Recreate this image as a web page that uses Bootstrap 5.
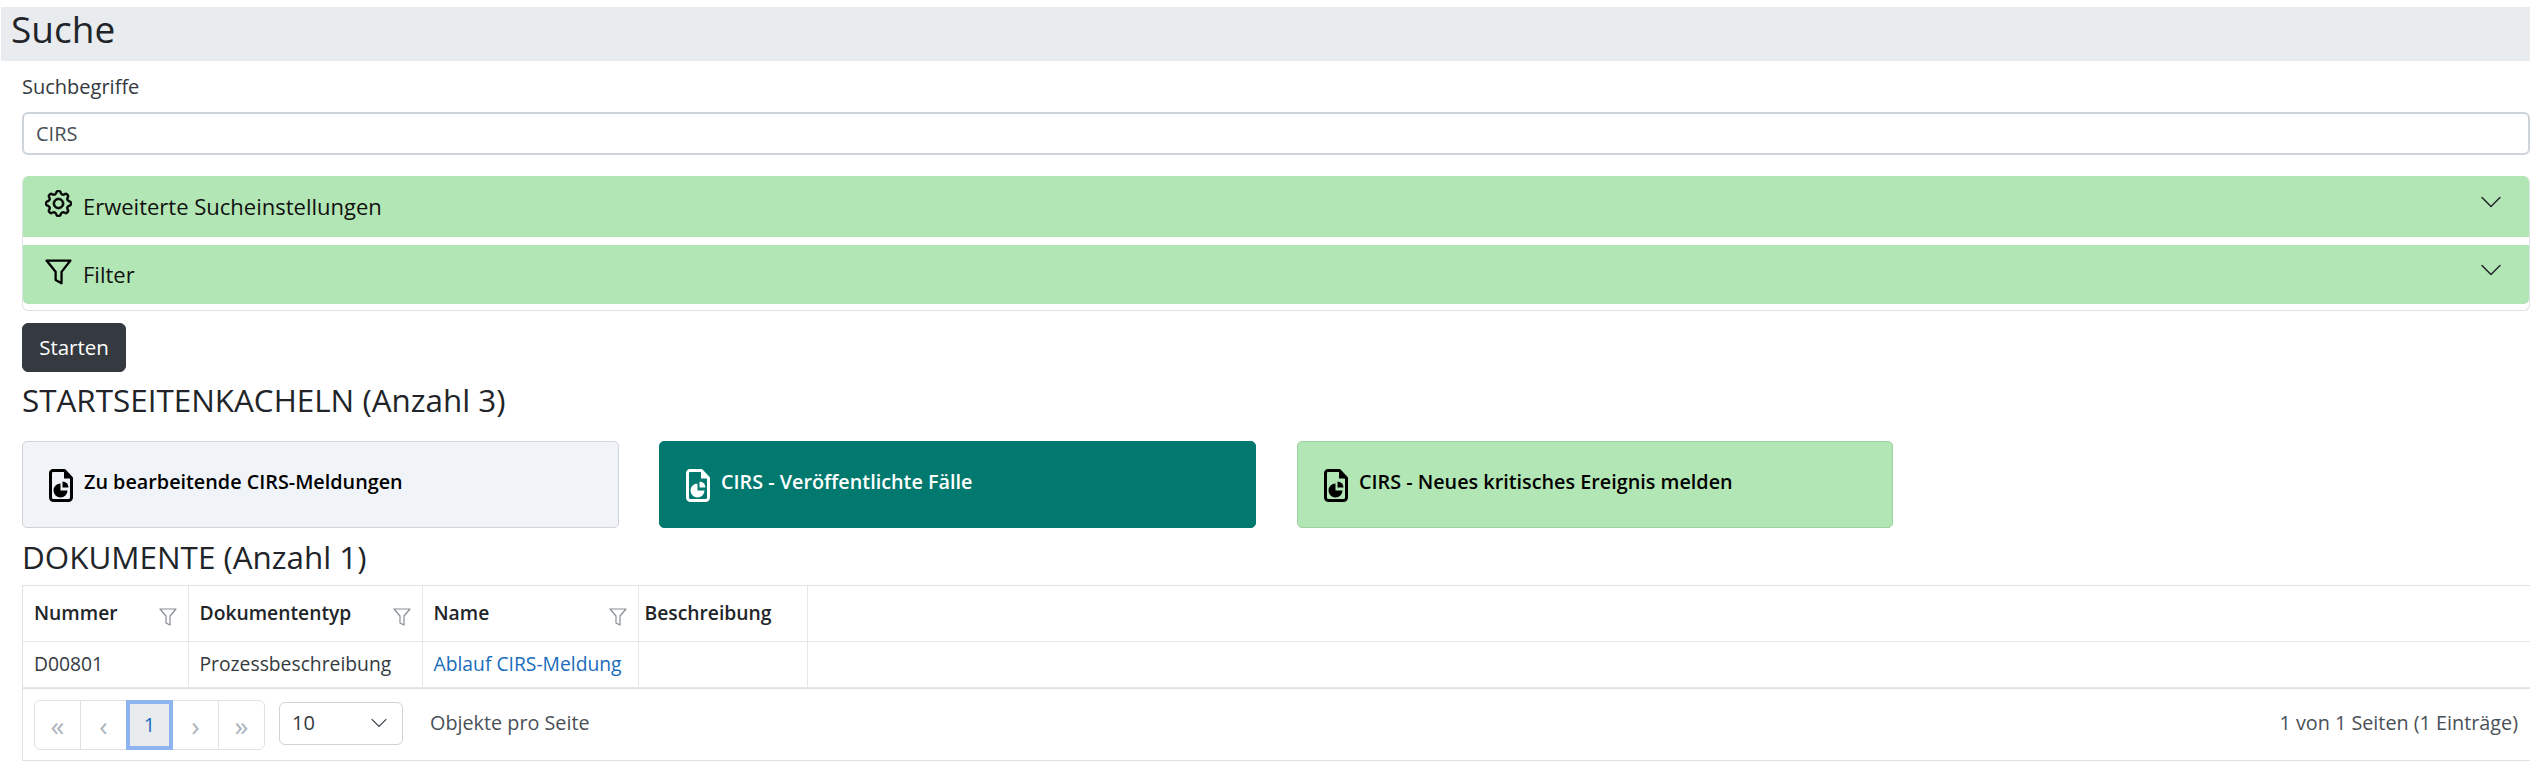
<!DOCTYPE html>
<html lang="de"><head><meta charset="utf-8"><title>Suche</title>
<link href="https://cdn.jsdelivr.net/npm/bootstrap@5.3.0/dist/css/bootstrap.min.css" rel="stylesheet">
<style>
html,body{height:762px;overflow:hidden}
body{font-family:"Open Sans","Liberation Sans",sans-serif;font-size:20px;color:#212529;background:#fff;padding-top:7px}
.page-band{background:#e9ecef;height:54px;margin-left:1px;padding:0 0 0 10px;font-size:37px;line-height:44px;font-weight:400;margin-bottom:0}
.page-body{padding:0 0 0 22px}
.term-label{display:block;font-size:20px;line-height:24px;margin:14px 0 13px;color:#343a40}
.term-input.form-control{height:43px;font-size:20px;padding:0 12px;border:2px solid #ced4da;color:#495057;border-radius:6px;margin-bottom:21px}
.search-acc{border:1px solid #dee2e6;border-top:0;border-radius:6px;height:135px;margin-bottom:12px;overflow:hidden;--bs-accordion-border-width:0}
.search-acc .accordion-item{border:0;background:transparent}
.search-acc .accordion-button{background:#b3e6b5;color:#111;font-size:22px;padding:0 26px 0 22px;box-shadow:none;border-radius:0;gap:11px}
.search-acc .accordion-button::after{width:24px;height:24px;background-size:24px;transform:translateY(-5px)}
.acc-first .accordion-button{height:61px;margin-bottom:8px}
.acc-second .accordion-button{height:59px}
.acc-ico{width:27px;height:27px;flex:none;transform:translateY(-3px);color:#000}
.go-btn.btn{background:#343a40;border-color:#343a40;color:#fff;font-size:20.5px;width:104px;height:49px;padding:0;border-radius:6px;display:block}
.sect-title{font-size:31.4px;line-height:38px;font-weight:400;margin:0;color:#212529}
.t-one{margin-top:9px;margin-bottom:22px}
.t-two{margin-top:10px;margin-bottom:9px}
.tile-row{gap:40px}
.tile{width:597px;height:87px;border-radius:5px;display:flex;align-items:center;gap:11px;padding:0 0 5px 26px;font-size:19.800px;font-weight:600;border:1px solid #ced4da;margin:0}
.tile svg{width:24px;height:33px;flex:none;transform:translateY(3px)}
.tile-light{background:#f0f4f8;color:#000}
.tile-teal{background:#01796f;border-color:#01796f;color:#fff;margin-right:1px}
.tile-green{background:#b3e6b5;border-color:#9fd0a1;color:#000;width:596px}
.doc-wrap{border:1px solid #dee2e6;border-right:0;height:176px}
.doc-table{table-layout:fixed;width:100%;margin:0;font-size:19.300px;border-color:#e4e7ea}
.doc-table th,.doc-table td{padding:0 11px;border-right:1px solid #e4e7ea;vertical-align:middle}
.doc-table th{height:55px;font-weight:600;position:relative;padding-bottom:0}
.doc-table td{height:46px;color:#343a40}
.doc-table tr>*:last-child{border-right:0}
.doc-table th.tight{padding-left:6px}
.fn{position:absolute;right:11px;top:21px;width:18px;height:20px}
.doc-link{color:#1a6cbd;text-decoration:none}
.pager-row{height:74px;padding:0 12px 0 11px;border-top:1px solid #dee2e6;display:flex;align-items:center}
.pager-row .pagination{margin:0 14px 0 0;--bs-pagination-border-color:#dee2e6}
.pager-row .page-link{width:47px;height:50px;padding:0;display:flex;align-items:center;justify-content:center;font-size:28px;color:#adb5bd;background:#fff;margin-left:0}
.pager-row .page-item+.page-item .page-link{margin-left:-1px;width:47px}
.pager-row .cur .page-link{background:#e9ecef;border:4px solid #8db4ee;border-radius:0;color:#1a6cbd;font-size:20px;position:relative;z-index:2}
.size-sel.form-select{width:124px;height:43px;font-size:20px;padding:0 12px;margin:-4px 27px 0 0;color:#343a40;border-color:#ced4da;background-image:url("data:image/svg+xml,%3csvg xmlns='http://www.w3.org/2000/svg' viewBox='0 0 16 16'%3e%3cpath fill='none' stroke='%23343a40' d='M1.500 4.500 8 11l6.500-6.500'/%3e%3c/svg%3e");background-size:18px 18px;background-position:right 14px center}
.pg-text{color:#495057;font-size:19.800px;margin-top:-4px}
</style></head><body>
<h1 class="page-band">Suche</h1>
<main class="page-body">
<label class="term-label" for="q">Suchbegriffe</label>
<input id="q" class="form-control term-input" value="CIRS">
<div class="accordion search-acc">
 <div class="accordion-item acc-first"><h2 class="accordion-header"><button class="accordion-button collapsed" type="button">
  <svg class="acc-ico" viewBox="0 0 16 16" fill="currentColor" stroke="currentColor" stroke-width=".45"><path d="M8 4.754a3.246 3.246 0 1 0 0 6.492 3.246 3.246 0 0 0 0-6.492zM5.754 8a2.246 2.246 0 1 1 4.492 0 2.246 2.246 0 0 1-4.492 0z"/><path d="M9.796 1.343c-.527-1.790-3.065-1.790-3.592 0l-.094.319a.873.873 0 0 1-1.255.52l-.292-.16c-1.64-.892-3.433.902-2.54 2.541l.159.292a.873.873 0 0 1-.52 1.255l-.319.094c-1.790.527-1.790 3.065 0 3.592l.319.094a.873.873 0 0 1 .52 1.255l-.16.292c-.892 1.64.901 3.434 2.541 2.54l.292-.159a.873.873 0 0 1 1.255.52l.094.319c.527 1.790 3.065 1.790 3.592 0l.094-.319a.873.873 0 0 1 1.255-.52l.292.16c1.64.893 3.434-.902 2.54-2.541l-.159-.292a.873.873 0 0 1 .52-1.255l.319-.094c1.790-.527 1.790-3.065 0-3.592l-.319-.094a.873.873 0 0 1-.52-1.255l.16-.292c.893-1.64-.902-3.433-2.541-2.54l-.292.159a.873.873 0 0 1-1.255-.52l-.094-.319zm-2.633.283c.246-.835 1.428-.835 1.674 0l.094.319a1.873 1.873 0 0 0 2.693 1.115l.291-.16c.764-.415 1.6.42 1.184 1.185l-.159.292a1.873 1.873 0 0 0 1.116 2.692l.318.094c.835.246.835 1.428 0 1.674l-.319.094a1.873 1.873 0 0 0-1.115 2.693l.16.291c.415.764-.42 1.6-1.185 1.184l-.291-.159a1.873 1.873 0 0 0-2.693 1.116l-.094.318c-.246.835-1.428.835-1.674 0l-.094-.319a1.873 1.873 0 0 0-2.692-1.115l-.292.16c-.764.415-1.6-.42-1.184-1.185l.159-.291A1.873 1.873 0 0 0 1.945 8.93l-.319-.094c-.835-.246-.835-1.428 0-1.674l.319-.094A1.873 1.873 0 0 0 3.06 4.377l-.16-.292c-.415-.764.42-1.6 1.185-1.184l.292.159a1.873 1.873 0 0 0 2.692-1.115l.094-.319z"/></svg>
  Erweiterte Sucheinstellungen</button></h2></div>
 <div class="accordion-item acc-second"><h2 class="accordion-header"><button class="accordion-button collapsed" type="button">
  <svg class="acc-ico" viewBox="0 0 16 16"><path d="M.9 1.500H15.100L9.800 8.200V15L6.300 13V8.200z" fill="none" stroke="currentColor" stroke-width="1.350" stroke-linejoin="round"/></svg>
  Filter</button></h2></div>
</div>
<button class="btn go-btn" type="button">Starten</button>
<h2 class="sect-title t-one">STARTSEITENKACHELN (Anzahl 3)</h2>
<div class="d-flex tile-row">
 <div class="tile tile-light"><svg viewBox="0 0 24 33"><path d="M4 1.500H15.500L22.500 9V28.500A3 3 0 0 1 19.500 31.500H4.500A3 3 0 0 1 1.500 28.500V4A2.500 2.500 0 0 1 4 1.500z" fill="none" stroke="currentColor" stroke-width="3" stroke-linejoin="round"/><path d="M15 2V9.500H22.500z" fill="currentColor"/><path d="M11.500 14.500A7 7 0 1 0 18.500 21.500H11.500z" fill="currentColor"/><path d="M13.500 12.500A6 6 0 0 1 19.500 18.500H13.500z" fill="currentColor"/></svg>Zu bearbeitende CIRS-Meldungen</div>
 <div class="tile tile-teal"><svg viewBox="0 0 24 33"><path d="M4 1.500H15.500L22.500 9V28.500A3 3 0 0 1 19.500 31.500H4.500A3 3 0 0 1 1.500 28.500V4A2.500 2.500 0 0 1 4 1.500z" fill="none" stroke="currentColor" stroke-width="3" stroke-linejoin="round"/><path d="M15 2V9.500H22.500z" fill="currentColor"/><path d="M11.500 14.500A7 7 0 1 0 18.500 21.500H11.500z" fill="currentColor"/><path d="M13.500 12.500A6 6 0 0 1 19.500 18.500H13.500z" fill="currentColor"/></svg>CIRS - Veröffentlichte Fälle</div>
 <div class="tile tile-green"><svg viewBox="0 0 24 33"><path d="M4 1.500H15.500L22.500 9V28.500A3 3 0 0 1 19.500 31.500H4.500A3 3 0 0 1 1.500 28.500V4A2.500 2.500 0 0 1 4 1.500z" fill="none" stroke="currentColor" stroke-width="3" stroke-linejoin="round"/><path d="M15 2V9.500H22.500z" fill="currentColor"/><path d="M11.500 14.500A7 7 0 1 0 18.500 21.500H11.500z" fill="currentColor"/><path d="M13.500 12.500A6 6 0 0 1 19.500 18.500H13.500z" fill="currentColor"/></svg>CIRS - Neues kritisches Ereignis melden</div>
</div>
<h2 class="sect-title t-two">DOKUMENTE (Anzahl 1)</h2>
<div class="doc-wrap">
<table class="table doc-table">
<colgroup><col style="width:165px"><col style="width:234px"><col style="width:216px"><col style="width:169px"><col></colgroup>
<thead><tr>
<th>Nummer<svg class="fn" viewBox="0 0 18 20"><path d="M1 2h16l-6 7v9l-4-2V9z" fill="none" stroke="#868e96" stroke-width="1.200" stroke-linejoin="round"/></svg></th>
<th>Dokumententyp<svg class="fn" viewBox="0 0 18 20"><path d="M1 2h16l-6 7v9l-4-2V9z" fill="none" stroke="#868e96" stroke-width="1.200" stroke-linejoin="round"/></svg></th>
<th>Name<svg class="fn" viewBox="0 0 18 20"><path d="M1 2h16l-6 7v9l-4-2V9z" fill="none" stroke="#868e96" stroke-width="1.200" stroke-linejoin="round"/></svg></th>
<th class="tight">Beschreibung</th><th></th></tr></thead>
<tbody><tr><td>D00801</td><td>Prozessbeschreibung</td><td><a class="doc-link" href="#">Ablauf CIRS-Meldung</a></td><td></td><td></td></tr></tbody>
</table>
<div class="pager-row">
 <ul class="pagination">
  <li class="page-item"><span class="page-link">«</span></li>
  <li class="page-item"><span class="page-link">‹</span></li>
  <li class="page-item cur"><span class="page-link">1</span></li>
  <li class="page-item"><span class="page-link">›</span></li>
  <li class="page-item"><span class="page-link">»</span></li>
 </ul>
 <select class="form-select size-sel"><option>10</option></select>
 <span class="pg-text">Objekte pro Seite</span>
 <span class="pg-text ms-auto">1 von 1 Seiten (1 Einträge)</span>
</div>
</div>
</main>
</body></html>
